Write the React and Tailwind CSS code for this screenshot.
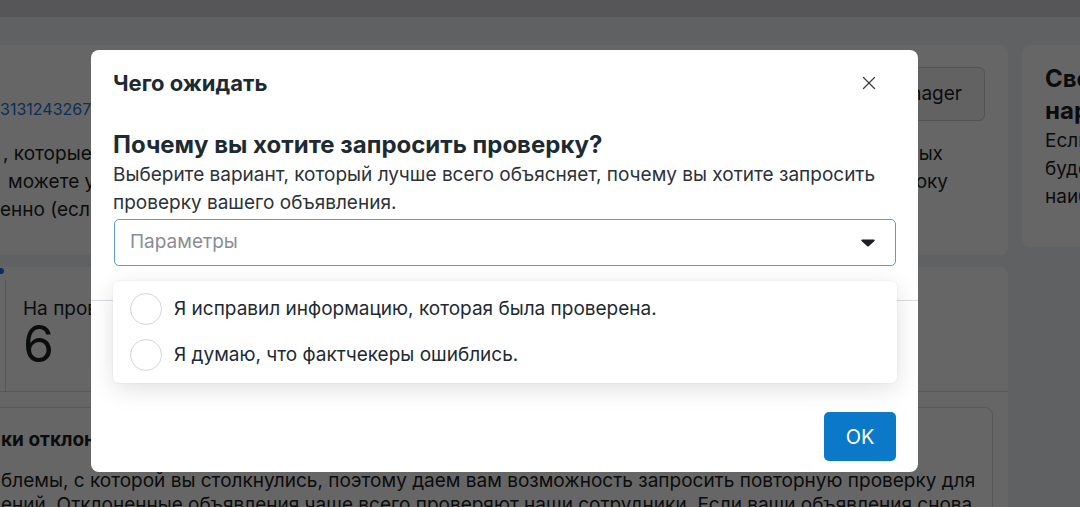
import { X } from "lucide-react"

function Caret() {
  return (
    <svg width="14" height="8" viewBox="0 0 14 8" className="shrink-0">
      <path d="M1.2 0.6h11.6c0.8 0 1.2 0.9 0.7 1.5L7.7 7.3c-0.4 0.4-1 0.4-1.4 0L0.5 2.1C0 1.5 0.4 0.6 1.2 0.6z" fill="#1c1e21" />
    </svg>
  )
}

function Radio({ label }) {
  return (
    <div className="flex items-center h-[46px]">
      <span className="w-[32px] h-[32px] rounded-full border-[1.5px] border-[#d3d6db] bg-white shrink-0" />
      <span className="ml-[12px] text-[19px] text-[#1c2b33]">{label}</span>
    </div>
  )
}

function Page() {
  return (
    <div className="text-[#1c1e21]">
      <div className="h-[17px] bg-[#d6d8dc]" />
      <div className="flex gap-[14px] pt-[28px]">
        {/* Left column */}
        <div className="-ml-[12px] w-[1020px] shrink-0 flex flex-col gap-[12px]">
          <div className="h-[210px] bg-white rounded-lg pl-[12px] pr-[23px] pt-[22px] flex flex-col">
            <div className="flex justify-between">
              <div className="pt-[32px]">
                <div className="text-[16px] leading-[20px] text-[#1b74e4] whitespace-nowrap">3131243267</div>
              </div>
              <button className="h-[54px] px-[22px] rounded-md border border-[#ccd0d5] bg-[#f5f6f7] text-[19px] text-[#1c1e21] whitespace-nowrap">
                Business Manager
              </button>
            </div>
            <div className="mt-[19px] text-[19px] leading-[28px] whitespace-nowrap">
              <div className="flex justify-between w-[943px] pl-[3px]">
                <span>, которые были отклонены за нарушение правил</span>
                <span>ых</span>
              </div>
              <div className="flex justify-between w-[948px] pl-[8px]">
                <span>можете узнать, почему так произошло</span>
                <span>оку</span>
              </div>
              <div>енно (если это возможно).</div>
            </div>
          </div>

          <div className="h-[260px] bg-white rounded-lg">
            <div className="h-[125px] border-b border-[#dadde1] flex">
              <div className="w-[17px] shrink-0">
                <div className="w-[16px] h-[6px] rounded-full bg-[#1b74e4] mt-[1px]" />
              </div>
              <div className="mt-[13px] border-l border-[#dadde1] pl-[17px] pt-[18px]">
                <div className="text-[19px] leading-[22px] whitespace-nowrap">На проверке</div>
                <div className="text-[50px] leading-[50px] -mt-[1px]">6</div>
              </div>
            </div>
            <div className="pl-[12px] pr-[15px] pt-[15px]">
              <div className="-ml-[12px] border border-[#dadde1] rounded-lg pl-[12px] pt-[21px] h-[140px]">
                <div className="text-[19px] leading-[22px] font-bold whitespace-nowrap">ки отклоненных объявлений</div>
                <div className="mt-[18px] text-[19px] leading-[24px] whitespace-nowrap">
                  <div>блемы, с которой вы столкнулись, поэтому даем вам возможность запросить повторную проверку для</div>
                  <div>ений. Отклоненные объявления чаще всего проверяют наши сотрудники. Если ваши объявления снова</div>
                </div>
              </div>
            </div>
          </div>
        </div>

        {/* Right column */}
        <div className="w-[200px] shrink-0">
          <div className="h-[202px] bg-white rounded-lg pl-[23px] pt-[18px] whitespace-nowrap">
            <div className="text-[24px] leading-[32px] font-bold">Своевременная</div>
            <div className="text-[24px] leading-[32px] font-bold">нарушения</div>
            <div className="text-[19px] leading-[28px]">
              <div>Если</div>
              <div>будет</div>
              <div>наиболее</div>
            </div>
          </div>
        </div>
      </div>
    </div>
  )
}

export default function App() {
  return (
    <div className="relative w-[1080px] h-[507px] overflow-hidden bg-[#f0f2f5] font-['Inter','Liberation_Sans',Arial,sans-serif]">
      <Page />
      <div className="absolute inset-0 bg-black/60" />

      {/* Modal */}
      <div className="absolute left-[91px] top-[50px] w-[827px] h-[422px] bg-white rounded-lg px-[22px] pt-[20px]">
        <div className="flex items-center justify-between h-[26px]">
          <h2 className="text-[22px] leading-[26px] font-bold text-[#1c2b33]">Чего ожидать</h2>
          <X size={22} strokeWidth={1.4} className="text-[#3a3f45] mr-[16px]" />
        </div>

        <h3 className="mt-[34px] text-[24px] leading-[30px] font-bold text-[#1c2b33]">
          Почему вы хотите запросить проверку?
        </h3>
        <p className="mt-[1px] text-[19px] leading-[28px] text-[#2b3238]">
          Выберите вариант, который лучше всего объясняет, почему вы хотите запросить проверку вашего объявления.
        </p>

        <div className="mt-[2px] ml-[1px] h-[47px] rounded-[5px] border-[1.5px] border-[#5b9bd6] flex items-center justify-between pl-[15px] pr-[20px]">
          <span className="text-[19px] text-[#8a8d91]">Параметры</span>
          <Caret />
        </div>

        <div className="-mx-[22px] mt-[34px] border-t border-[#dadde1]" />

        <div className="flex justify-end mt-[111px]">
          <button className="w-[72px] h-[49px] rounded-[5px] bg-[#0b78c8] text-white text-[20px]">OK</button>
        </div>

        {/* Dropdown menu */}
        <div className="absolute left-[22px] top-[231px] w-[784px] h-[102px] bg-white rounded-md shadow-[0_6px_24px_rgba(0,0,0,0.12),0_0_2px_rgba(0,0,0,0.08)] pl-[17px] pt-[5px]">
          <Radio label="Я исправил информацию, которая была проверена." />
          <Radio label="Я думаю, что фактчекеры ошиблись." />
        </div>
      </div>
    </div>
  )
}
